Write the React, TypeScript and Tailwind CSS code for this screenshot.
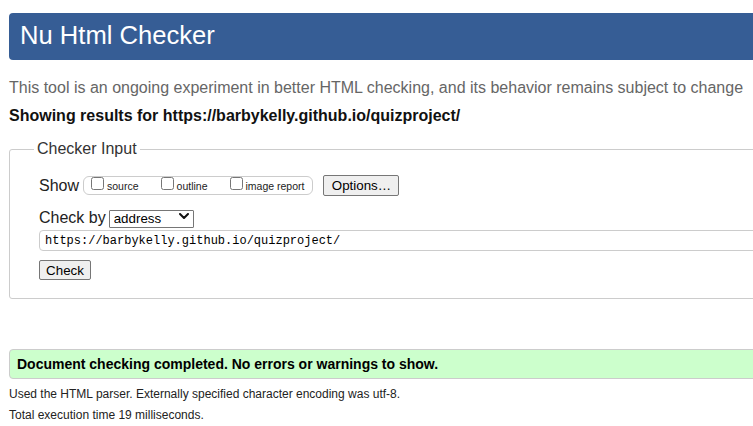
import React from 'react';

const font = { fontFamily: '"Liberation Sans", Arial, sans-serif' };

const showOptions = ['source', 'outline', 'image report'];

function Chevron() {
    return (
        <svg
            className="absolute right-[5px] top-[7px] pointer-events-none"
            width="10"
            height="6"
            viewBox="0 0 10 6"
        >
            <path d="M1 1 L5 5 L9 1" fill="none" stroke="#111" strokeWidth="2" strokeLinecap="round" strokeLinejoin="round" />
        </svg>
    );
}

export default function App() {
    return (
        <div className="w-[753px] h-[426px] overflow-hidden bg-white text-[#222]" style={font}>
            <div className="w-[820px] pl-[9px] pt-[13px]">
                <header className="h-[47px] rounded-[4px] bg-[#365d95] pl-[11px] pt-[8px]">
                    <h1 className="text-[25.6px] leading-[29px] text-white font-normal">Nu Html Checker</h1>
                </header>

                <p className="mt-[18px] text-[16px] leading-[20px] text-[#666] whitespace-nowrap">
                    This tool is an ongoing experiment in better HTML checking, and its behavior remains subject to change
                </p>
                <p className="mt-[8px] text-[16px] leading-[20px] font-bold text-[#111] whitespace-nowrap">
                    Showing results for https://barbykelly.github.io/quizproject/
                </p>

                <fieldset className="mt-[13px] w-[800px] border border-[#cccccc] rounded-[3px] pl-[29px] pt-[16px] pb-[18px]">
                    <legend className="ml-[-5px] px-[3px] text-[16px] leading-[20px] text-[#333]">Checker Input</legend>

                    <div className="flex items-center h-[21px]">
                        <span className="text-[16px] leading-[20px]">Show</span>
                        <div className="ml-[4px] h-[19px] flex items-baseline border border-[#cccccc] rounded-[6px] pl-[7px] pr-[8px]">
                            {showOptions.map((opt, i) => (
                                <label
                                    key={opt}
                                    className={`flex items-baseline gap-[3px] ${i < showOptions.length - 1 ? 'mr-[22px]' : ''}`}
                                >
                                    <input type="checkbox" className="m-0 w-[13px] h-[13px]" />
                                    <span className="text-[10.5px] leading-[13px]">{opt}</span>
                                </label>
                            ))}
                        </div>
                        <button className="ml-[10px] w-[76px] h-[21px] bg-[#efefef] border border-[#767676] rounded-[2px] text-[13.33px] leading-[15px] text-black">
                            Options…
                        </button>
                    </div>

                    <div className="mt-[13px] flex items-center h-[18px]">
                        <span className="text-[16px] leading-[20px]">Check by</span>
                        <div className="relative ml-[3px]">
                            <select className="appearance-none w-[85px] h-[18px] border border-[#767676] rounded-[1px] bg-white pl-[4px] text-[13.33px] leading-[16px] text-black">
                                <option>address</option>
                                <option>file upload</option>
                                <option>text input</option>
                            </select>
                            <Chevron />
                        </div>
                    </div>

                    <input
                        type="text"
                        readOnly
                        value="https://barbykelly.github.io/quizproject/"
                        className="mt-[3px] block w-[760px] h-[21px] border border-[#cccccc] rounded-[4px] pl-[5px] text-[12px] text-black"
                        style={{ fontFamily: '"Liberation Mono", "DejaVu Sans Mono", monospace' }}
                    />

                    <button className="mt-[9px] block w-[52px] h-[20px] bg-[#efefef] border border-[#767676] rounded-[2px] text-[13.33px] leading-[15px] text-black">
                        Check
                    </button>
                </fieldset>

                <div className="mt-[50px] w-[800px] border border-[#cccccc] rounded-l-[4px] bg-[#ccffcc] pl-[7px] pt-[4px] pb-[4px]">
                    <p className="text-[14px] leading-[20px] font-bold text-black">
                        Document checking completed. No errors or warnings to show.
                    </p>
                </div>

                <p className="mt-[5px] text-[12px] leading-[20px]">
                    Used the HTML parser. Externally specified character encoding was utf-8.
                </p>
                <p className="mt-[1px] text-[12px] leading-[20px]">Total execution time 19 milliseconds.</p>
            </div>
        </div>
    );
}
